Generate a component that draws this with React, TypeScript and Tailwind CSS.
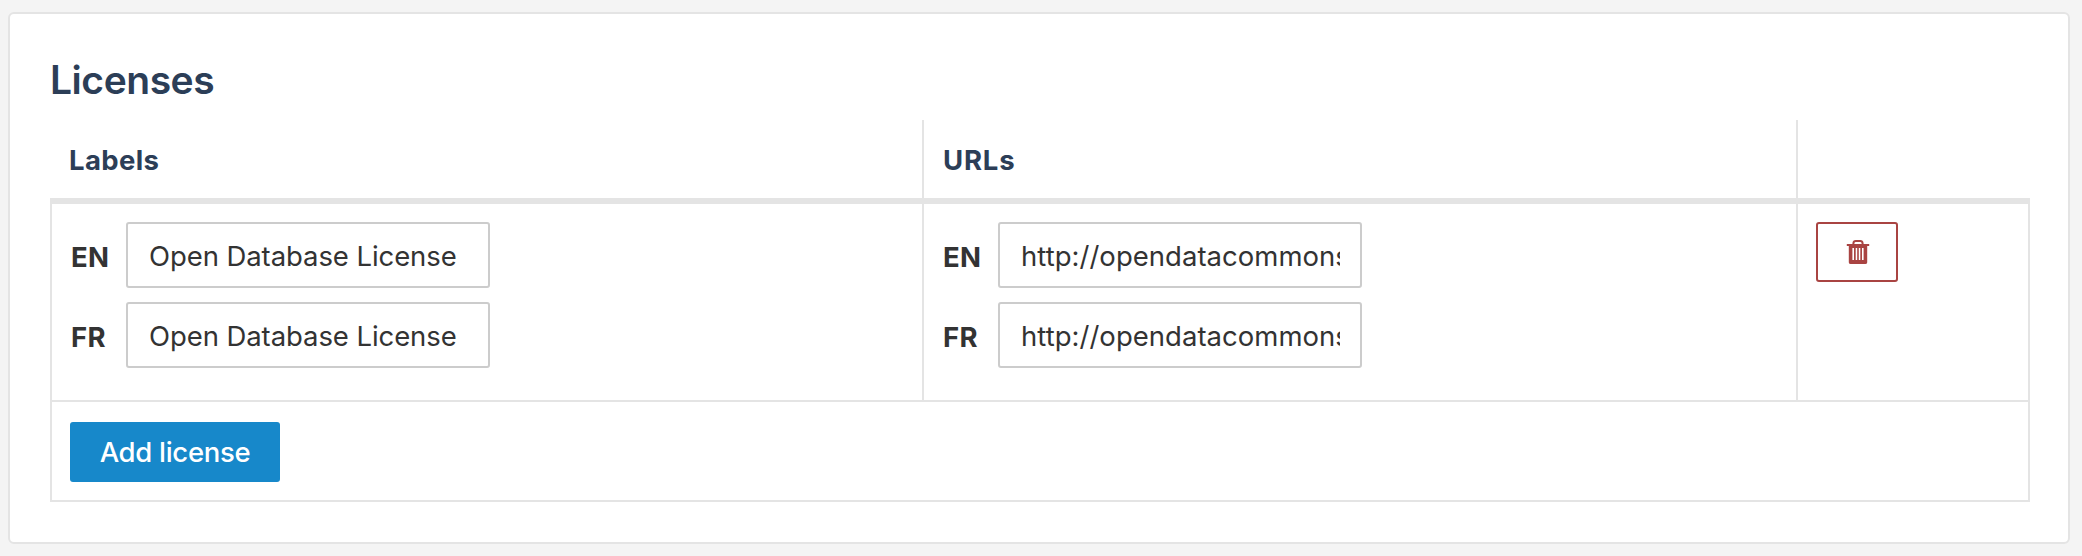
import React from "react";

function TrashIcon() {
  return (
    <svg width="24" height="26" viewBox="0 0 24 26" fill="none" aria-hidden="true">
      <path d="M7.4 5.5V4.4Q7.6 2 9.8 2H14.2Q16.4 2 16.6 4.4V5.5" stroke="#a94442" strokeWidth="2" />
      <rect x="0.8" y="5" width="22.4" height="2" fill="#a94442" />
      <path
        fillRule="evenodd"
        fill="#a94442"
        d="M2.8 7H21.2V23.4Q21 25 19.4 25H4.6Q3 25 2.8 23.4ZM6.4 9V21H8V9ZM9.7 9V21H11.2V9ZM12.8 9V21H14.3V9ZM16 9V21H17.6V9Z"
      />
    </svg>
  );
}

function Field({ lang, value, spacing }: { lang: string; value: string; spacing: string }) {
  return (
    <div className="flex h-[66px] items-center">
      <label className="w-14 shrink-0 pt-[3px] pl-px text-[27.5px] leading-[34px] font-bold tracking-[0.3px]">{lang}</label>
      <input
        className={`h-[66px] w-[364px] rounded-[3px] border-2 border-[#cccccc] bg-white pt-[2px] pr-5 pl-[21px] text-[27.5px] text-[#333333] outline-none ${spacing}`}
        defaultValue={value}
        aria-label={lang}
      />
    </div>
  );
}

export default function App() {
  return (
    <main className="h-[556px] bg-[#f4f4f4] pt-3 pr-3 pb-3 pl-2 font-['Inter',sans-serif] text-[#333333]">
      <section className="h-[532px] rounded-md border-2 border-[#e4e4e4] bg-white pt-[42px] pr-[38px] pl-10">
        <h2 className="h-16 text-[39px] leading-[48px] font-semibold tracking-[-0.45px] text-[#2c3e57]">Licenses</h2>
        <div className="grid h-[78px] grid-cols-[874px_874px_232px] text-[27.5px] font-bold text-[#2c3e57]">
          <div className="flex items-center border-r-2 border-[#e4e4e4] pt-1 pl-[19px]">
            <span className="tracking-[0.35px]">Labels</span>
          </div>
          <div className="flex items-center border-r-2 border-[#e4e4e4] pt-1 pl-[19px]">
            <span className="tracking-[0.8px]">URLs</span>
          </div>
          <div />
        </div>
        <div className="border-x-2 border-t-[6px] border-b-2 border-[#e4e4e4]">
          <div className="grid h-[198px] grid-cols-[872px_874px_230px] border-b-2 border-[#e4e4e4]">
            <div className="flex flex-col gap-3.5 border-r-2 border-[#e4e4e4] pt-[18px] pl-[18px]">
              <Field lang="EN" value="Open Database License" spacing="tracking-[-0.08px]" />
              <Field lang="FR" value="Open Database License" spacing="tracking-[-0.08px]" />
            </div>
            <div className="flex flex-col gap-3.5 border-r-2 border-[#e4e4e4] pt-[18px] pl-[18px]">
              <Field lang="EN" value="http://opendatacommons.org/licenses/odbl/" spacing="tracking-[0.03px]" />
              <Field lang="FR" value="http://opendatacommons.org/licenses/odbl/" spacing="tracking-[0.03px]" />
            </div>
            <div className="pt-[18px] pl-[18px]">
              <button
                type="button"
                aria-label="Delete"
                className="flex h-[60px] w-[82px] items-start justify-center rounded-[3px] border-2 border-[#a94442] pt-[15px] pl-[2px]"
              >
                <TrashIcon />
              </button>
            </div>
          </div>
          <div className="h-[98px] px-[18px] pt-5">
            <button
              type="button"
              className="flex h-[60px] w-[210px] items-center justify-center rounded-[3px] bg-[#1788ca] pt-[2px] text-[27.5px] font-medium tracking-[-0.3px] text-white"
            >
              Add license
            </button>
          </div>
        </div>
      </section>
    </main>
  );
}
